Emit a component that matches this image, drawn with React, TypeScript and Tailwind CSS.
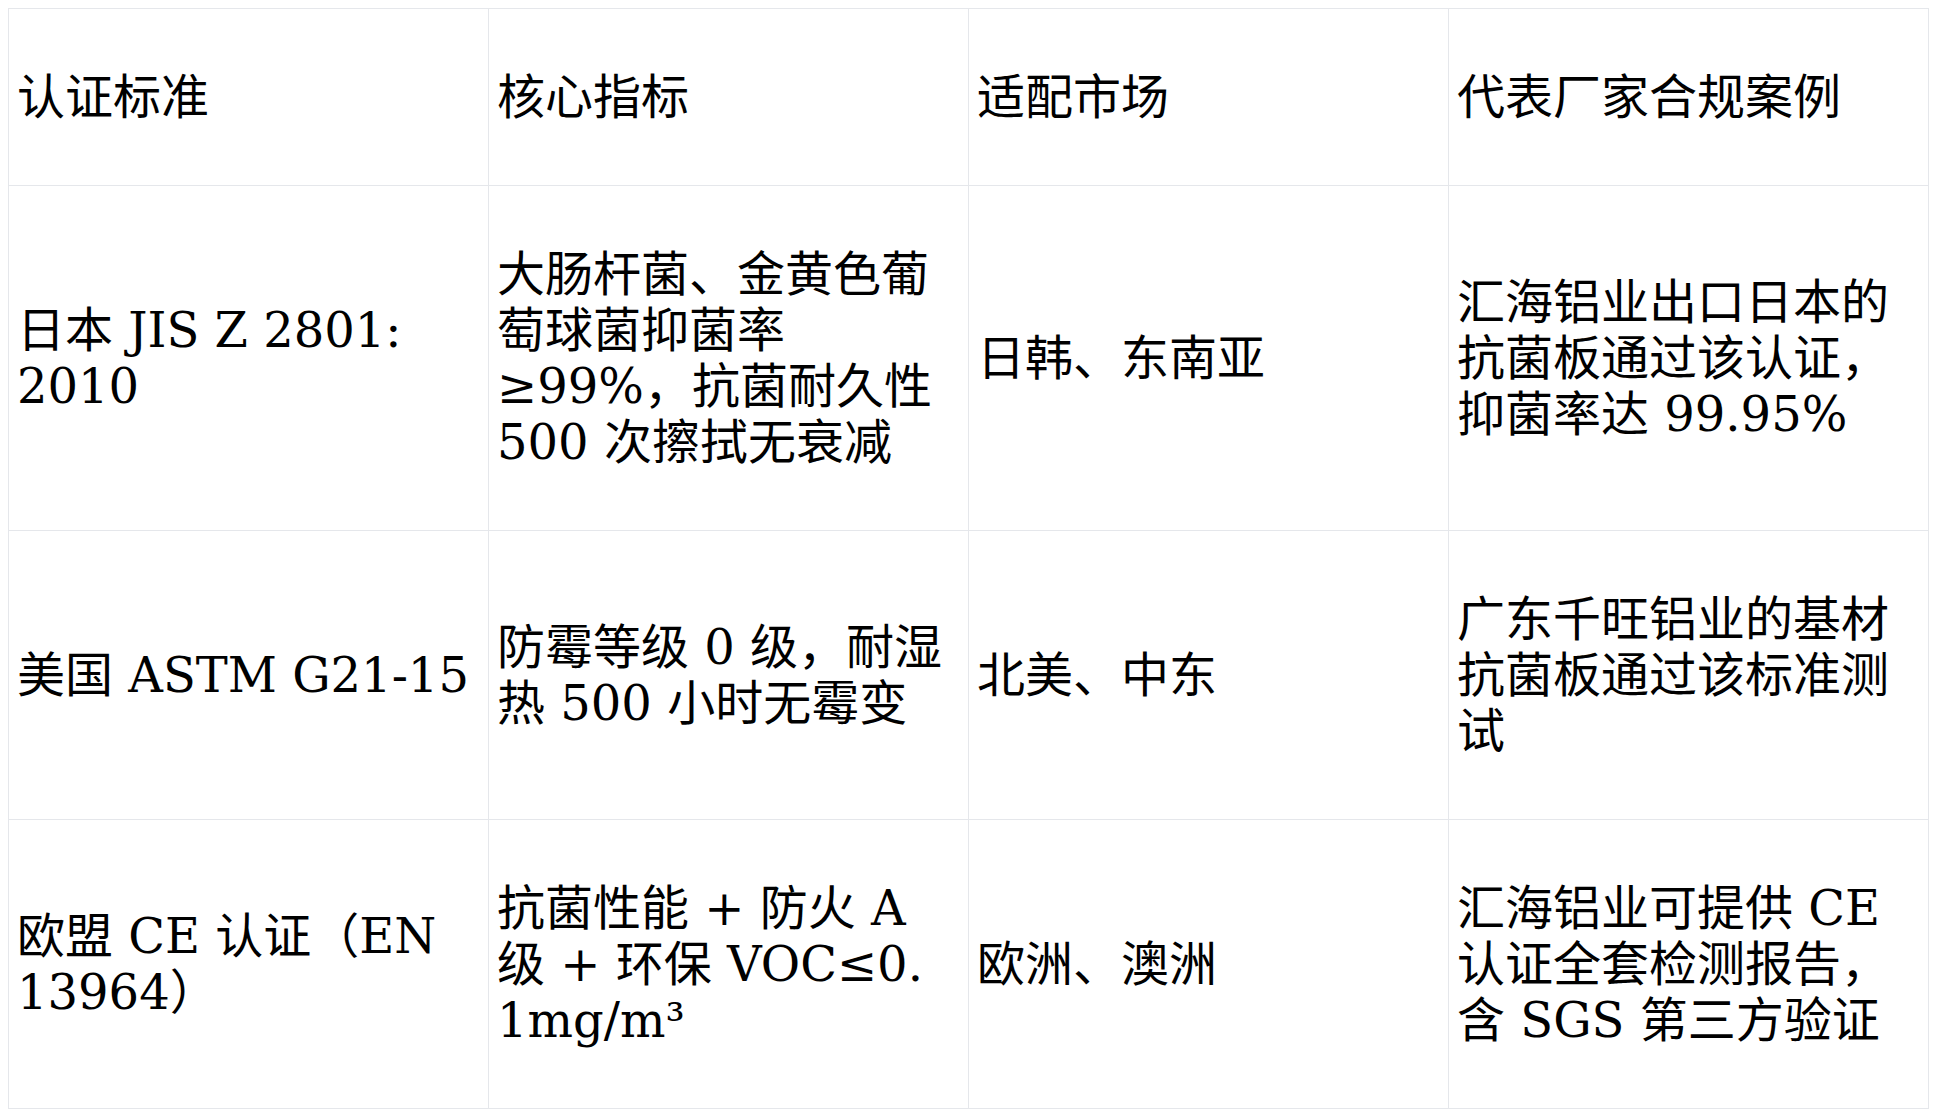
import React from 'react';

type Row = {
  standard: React.ReactNode;
  metric: React.ReactNode;
  market: string;
  example: string;
};

const HEADERS = ['认证标准', '核心指标', '适配市场', '代表厂家合规案例'];

const ROWS: Row[] = [
  {
    standard: (
      <>
        日本 JIS Z 2801:
        <br />
        2010
      </>
    ),
    metric: '大肠杆菌、金黄色葡萄球菌抑菌率≥99%，抗菌耐久性 500 次擦拭无衰减',
    market: '日韩、东南亚',
    example: '汇海铝业出口日本的抗菌板通过该认证，抑菌率达 99.95%',
  },
  {
    standard: '美国 ASTM G21-15',
    metric: '防霉等级 0 级，耐湿热 500 小时无霉变',
    market: '北美、中东',
    example: '广东千旺铝业的基材抗菌板通过该标准测试',
  },
  {
    standard: '欧盟 CE 认证（EN 13964）',
    metric: (
      <>
        抗菌性能 + 防火 A 级 + 环保 VOC≤0.
        <br />
        1mg/m³
      </>
    ),
    market: '欧洲、澳洲',
    example: '汇海铝业可提供 CE 认证全套检测报告，含 SGS 第三方验证',
  },
];

const cell =
  'border border-[#e5e7eb] px-2 py-[60px] align-middle text-left font-normal';

export default function App() {
  return (
    <div className="p-2 bg-white min-h-screen">
      <table className="w-[1921px] table-fixed border-collapse text-[48px] leading-[56px] text-black font-['DejaVu_Serif','Noto_Sans_CJK_SC',serif]">
        <thead>
          <tr>
            {HEADERS.map((h) => (
              <th key={h} className={cell}>
                {h}
              </th>
            ))}
          </tr>
        </thead>
        <tbody>
          {ROWS.map((r, i) => (
            <tr key={i}>
              <td className={cell}>{r.standard}</td>
              <td className={cell}>{r.metric}</td>
              <td className={cell}>{r.market}</td>
              <td className={cell}>{r.example}</td>
            </tr>
          ))}
        </tbody>
      </table>
    </div>
  );
}
